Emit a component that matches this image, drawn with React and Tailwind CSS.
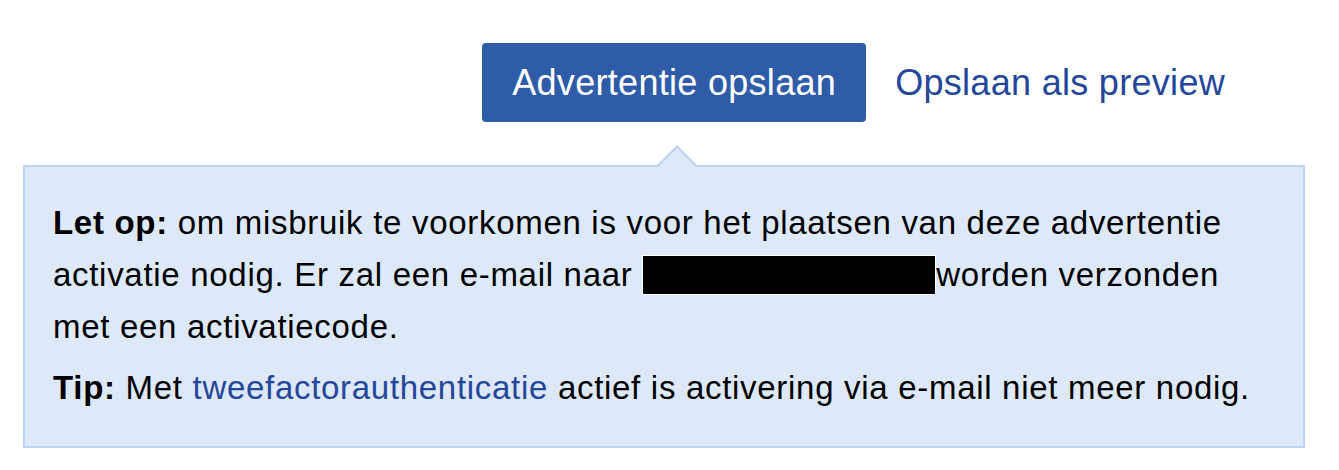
export default function App() {
  return (
    <div className="min-h-[470px] w-[1339px] bg-white font-['Liberation_Sans',Arial,sans-serif]">
      <div className="ml-[23px] w-[1282px] pt-[43px]">
        <div className="flex items-center justify-end pr-[80px] tracking-[0.3px]">
          <button className="h-[79px] rounded-[4px] bg-[#2f5ca8] px-[30px] text-[36px] text-white">
            Advertentie opslaan
          </button>
          <a href="#" className="ml-[29px] text-[36px] text-[#24479a]">
            Opslaan als preview
          </a>
        </div>
        <div className="relative mt-[43px] border-2 border-[#bcd3f1] bg-[#dde8f8] px-[28px] pt-[30px] pb-[32px] text-[33px] leading-[52px] tracking-[0.7px] text-black">
          {/* pointer towards the save button */}
          <div className="absolute -top-[22px] left-[630px] h-0 w-0 border-x-[22px] border-b-[22px] border-x-transparent border-b-[#bcd3f1]" />
          <div className="absolute -top-[19px] left-[632px] h-0 w-0 border-x-[20px] border-b-[20px] border-x-transparent border-b-[#dde8f8]" />
          <p>
            <b>Let op:</b> om misbruik te voorkomen is voor het plaatsen van deze advertentie
            activatie nodig. Er zal een e-mail naar{" "}
            <span className="inline-block h-[40px] w-[294px] border border-white bg-black align-[-9px]" />
            worden verzonden met een activatiecode.
          </p>
          <p className="mt-[9px]">
            <b>Tip:</b> Met{" "}
            <a href="#" className="text-[#24479a]">
              tweefactorauthenticatie
            </a>{" "}
            actief is activering via e-mail niet meer nodig.
          </p>
        </div>
      </div>
    </div>
  );
}
